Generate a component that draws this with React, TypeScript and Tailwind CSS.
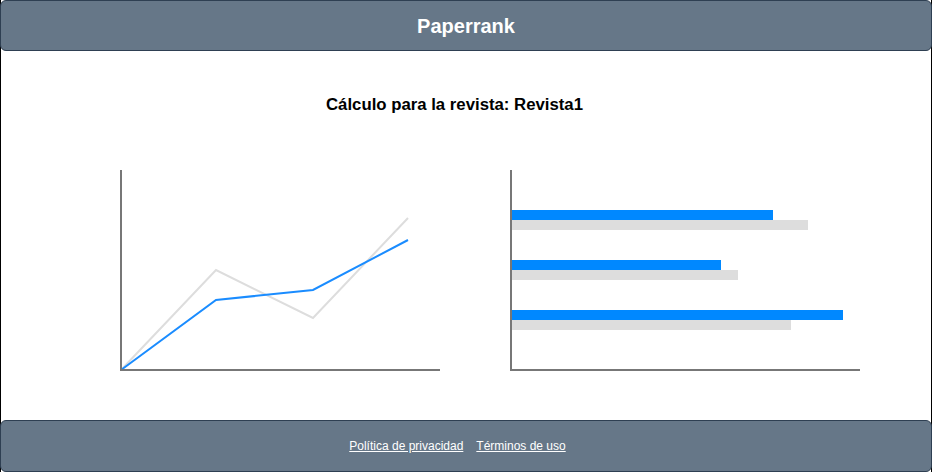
import React from "react";

const grayLine = "121,370 216,270 313,318 408,218";
const blueLine = "121,370 216,300 313,290 408,240";

const bars = [
  { y: 210, blue: 773, gray: 808 },
  { y: 260, blue: 721, gray: 738 },
  { y: 310, blue: 843, gray: 791 },
];

const LineChart: React.FC = () => (
  <svg width={322} height={203} viewBox="119 169 322 203">
    <polyline points={grayLine} fill="none" stroke="#dddddd" strokeWidth={2} />
    <polyline points={blueLine} fill="none" stroke="#1a8cff" strokeWidth={2} />
    <line x1={121} y1={170} x2={121} y2={371} stroke="#777777" strokeWidth={2} />
    <line x1={120} y1={370} x2={440} y2={370} stroke="#777777" strokeWidth={2} />
  </svg>
);

const BarChart: React.FC = () => (
  <svg width={352} height={203} viewBox="509 169 352 203">
    {bars.map((b) => (
      <g key={b.y}>
        <rect x={511} y={b.y} width={b.blue - 511} height={10} fill="#0088ff" />
        <rect x={511} y={b.y + 10} width={b.gray - 511} height={10} fill="#dddddd" />
      </g>
    ))}
    <line x1={511} y1={170} x2={511} y2={371} stroke="#777777" strokeWidth={2} />
    <line x1={510} y1={370} x2={860} y2={370} stroke="#777777" strokeWidth={2} />
  </svg>
);

const App: React.FC = () => {
  return (
    <div className="h-[472px] w-[932px] flex flex-col border-x border-black bg-white font-['Liberation_Sans',Arial,sans-serif]">
      <header className="-mx-px h-[51px] shrink-0 flex items-center justify-center rounded-md border border-[#2e3f52] bg-[#667788]">
        <h1 className="text-xl font-bold text-white">Paperrank</h1>
      </header>

      <main className="flex-1 flex flex-col pt-[42px]">
        <h2 className="pr-[23px] text-center text-[16.75px] leading-6 font-bold text-black">
          Cálculo para la revista: Revista1
        </h2>
        <div className="mt-[52px] flex pl-[118px] gap-[68px]">
          <LineChart />
          <BarChart />
        </div>
      </main>

      <footer className="-mx-px h-[52px] shrink-0 flex items-center justify-center gap-[13px] pr-[17px] rounded-md border border-[#2e3f52] bg-[#667788] text-xs text-white">
        <a href="#" className="underline">Política de privacidad</a>
        <a href="#" className="underline">Términos de uso</a>
      </footer>
    </div>
  );
};

export default App;
